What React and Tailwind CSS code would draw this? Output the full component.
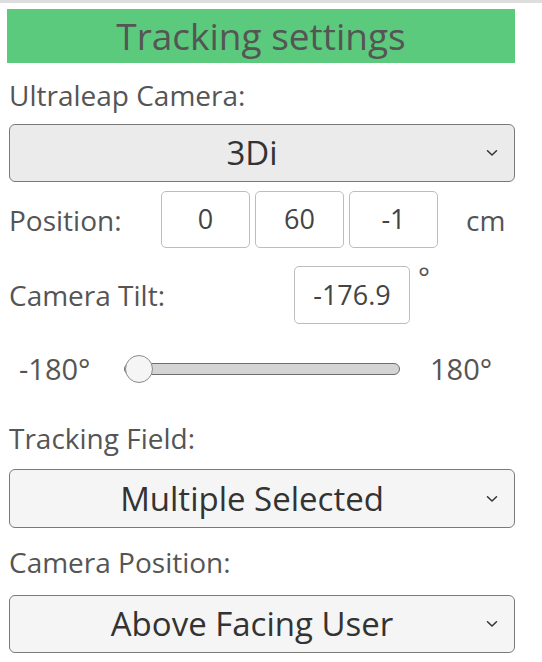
import React from "react";

const Chevron = () => (
  <svg width="12" height="8" viewBox="0 0 12 8" className="absolute right-[16px] top-1/2 -translate-y-1/2">
    <path d="M1.5 1.8 L6 6 L10.5 1.8" fill="none" stroke="#333" strokeWidth="1.5" strokeLinecap="round" strokeLinejoin="round" />
  </svg>
);

const SelectBox = ({ value, light, className = "" }) => (
  <div
    className={`relative w-[506px] border border-[#7a7a7a] rounded-[6px] flex items-center justify-center text-[33px] leading-[40px] text-[#333] ${
      light ? "bg-[#f5f5f5]" : "bg-[#ebebeb]"
    } ${className}`}
  >
    <span className="-translate-x-[10px]">{value}</span>
    <Chevron />
  </div>
);

const NumBox = ({ value, w = "w-[89px]" }) => (
  <div className={`${w} h-full bg-white border border-[#bdbdbd] rounded-[5px] flex items-center justify-center text-[27px] text-[#444]`}>
    {value}
  </div>
);

export default function App() {
  return (
    <div className="w-[542px] h-[662px] bg-white overflow-hidden font-['Open_Sans',sans-serif] text-[#555]">
      <div className="h-[3px] bg-[#dedede]" />
      <div className="mt-[6px] ml-[7px] w-[508px] h-[54px] bg-[#5bca7d] flex items-center justify-center text-[37px] leading-[44px] text-[#555]">
        Tracking settings
      </div>

      <div className="pl-[9px] flex flex-col text-[28px]">
        <div className="mt-[17px] h-[30px] leading-[30px]">Ultraleap Camera:</div>
        <SelectBox value="3Di" className="mt-[14px] h-[58px]" />

        {/* position */}
        <div className="mt-[9px] h-[57px] flex items-center">
          <div className="w-[152px]">Position:</div>
          <div className="flex h-full gap-[5px]">
            <NumBox value="0" />
            <NumBox value="60" />
            <NumBox value="-1" />
          </div>
          <div className="ml-[28px]">cm</div>
        </div>

        {/* tilt */}
        <div className="mt-[18px] h-[58px] flex items-center">
          <div className="w-[285px]">Camera Tilt:</div>
          <div className="h-full flex">
            <NumBox value="-176.9" w="w-[116px]" />
          </div>
          <div className="self-start ml-[8px] -mt-[4px] leading-[30px]">°</div>
        </div>

        {/* slider */}
        <div className="mt-[30px] h-[30px] flex items-center text-[29px]">
          <div className="ml-[10px] w-[105px]">-180°</div>
          <div className="relative w-[276px] h-[12px] bg-[#d4d4d4] border border-[#6e6e6e] rounded-full">
            <div className="absolute left-0 top-1/2 -translate-y-1/2 w-[28px] h-[28px] rounded-full bg-[#f5f5f5] border border-[#8a8a8a]" />
          </div>
          <div className="ml-[30px]">180°</div>
        </div>

        <div className="mt-[39px] h-[30px] leading-[30px]">Tracking Field:</div>
        <SelectBox value="Multiple Selected" light className="mt-[16px] h-[59px]" />

        <div className="mt-[19px] h-[30px] leading-[30px]">Camera Position:</div>
        <SelectBox value="Above Facing User" light className="mt-[18px] h-[58px]" />
      </div>
    </div>
  );
}
